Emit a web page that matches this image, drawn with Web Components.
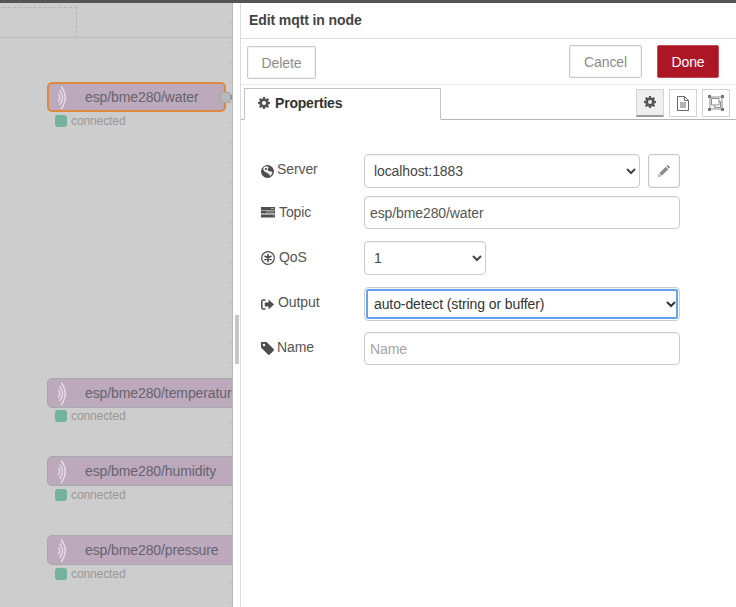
<!DOCTYPE html>
<html>
  <head>
    <meta charset="utf-8" />
    <title>Edit mqtt in node</title>
    <style>
      html, body { margin: 0; height: 100%; overflow: hidden; background: #fff; }
      body { font: 14px "Liberation Sans", Arial, sans-serif; letter-spacing: -0.1px; }
    </style>

    <template id="flowNodeTemplate">
      <style>
        :host { position: absolute; left: 47px; display: block; width: 240px; height: 45px; }
        #body {
          box-sizing: border-box;
          height: 30px;
          background: #bca9bc;
          border: 1px solid #a9a9a9;
          border-radius: 5px;
          color: #67636f;
          line-height: 28px;
          padding-left: 37px;
          white-space: nowrap;
          overflow: hidden;
          position: relative;
        }
        :host([selected]) { width: 179px; }
        :host([selected]) #body { border: 2px solid #dd8a3e; line-height: 26px; padding-left: 36px; }
        svg { position: absolute; left: 8px; top: 3px; }
        :host([selected]) svg { left: 7px; top: 2px; }
        #status { display: flex; align-items: center; gap: 4px; margin: var(--status-gap, 3px) 0 0 8px; height: 12px; font-size: 12px; color: #989898; }
        #dot { width: 12px; height: 12px; background: #73b29c; border-radius: 3px; }
        #port {
          display: none;
          position: absolute;
          left: 173px; top: 10px;
          width: 9px; height: 9px;
          background: #b9b9b9;
          border: 1px solid #a5a5a5;
          border-radius: 3px;
        }
        #port::after {
          content: "";
          position: absolute;
          left: 10px; top: 1px;
          border-left: 3px solid #8f8f8f;
          border-top: 3px solid transparent;
          border-bottom: 3px solid transparent;
        }
        :host([selected]) #port { display: block; }
      </style>
      <div id="body"><svg width="14" height="24" viewBox="0 0 14 24" fill="none" stroke="#e2dce2" stroke-width="1.5" stroke-linecap="round"><path d="M5.500 1Q13 11.500 5.500 22.500"/><path d="M4 5Q9 11.500 4 18.500"/><path d="M2.500 8.500Q5 11.500 2.500 15"/></svg><slot></slot></div>
      <div id="status"><span id="dot"></span><span>connected</span></div>
      <div id="port"></div>
    </template>

    <template id="flowCanvasTemplate">
      <style>
        :host {
          display: block;
          position: relative;
          flex: none;
          box-sizing: border-box;
          width: 233px;
          overflow: hidden;
          background: #cdcdcd;
          border-right: 1px solid #b9b9b9;
        }
        #rule { position: absolute; left: 0; right: 0; top: 34px; height: 1px; background: #bdbdbd; }
        #dash {
          position: absolute;
          left: -2px; top: 4px;
          width: 78px; height: 30px;
          border-top: 1px dashed #b5b5b5;
          border-right: 1px dashed #b5b5b5;
        }
        #ticks {
          position: absolute;
          right: 0; top: 0; bottom: 0;
          width: 3px;
          background: repeating-linear-gradient(to bottom, transparent 0 19px, #bdbdbd 19px 20px);
        }
      </style>
      <div id="dash"></div>
      <div id="rule"></div>
      <div id="ticks"></div>
      <slot></slot>
    </template>

    <template id="plainButtonTemplate">
      <style>
        :host {
          display: inline-flex;
          align-items: center;
          justify-content: center;
          box-sizing: border-box;
          height: 33px;
          background: #fff;
          border: 1px solid #c9c9c9;
          border-radius: 2px;
          color: #8c8c8c;
          box-shadow: inset 0 0 0 1px #f4f4f4;
        }
        :host([primary]) {
          background: #ad1625;
          border-color: #c04a55;
          color: #fff;
          box-shadow: none;
        }
      </style>
      <slot></slot>
    </template>

    <template id="iconTabTemplate">
      <style>
        :host {
          display: flex;
          align-items: center;
          justify-content: center;
          box-sizing: border-box;
          width: 28px;
          height: 28px;
          background: #fff;
          border: 1px solid #d4d4d4;
        }
        :host([active]) {
          background: #efefef;
          border-bottom: 2px solid #9a9a9a;
        }
      </style>
      <slot></slot>
    </template>

    <template id="formRowTemplate">
      <style>
        :host { display: flex; align-items: center; margin-bottom: 12px; color: #555; }
        #label { flex: none; width: 103px; display: flex; align-items: center; }
        #text { margin-left: var(--label-gap, 3px); position: relative; top: var(--label-top, -1px); }
        #control { flex: 1; display: flex; gap: 8px; }
      </style>
      <div id="label"><slot name="icon"></slot><span id="text"></span></div>
      <div id="control"><slot></slot></div>
    </template>

    <template id="textFieldTemplate">
      <style>
        :host { display: block; flex: 1; }
        input {
          display: block;
          box-sizing: border-box;
          width: 100%;
          height: 33px;
          padding: 0 5px;
          border: 1px solid #ccc;
          border-radius: 4px;
          box-shadow: inset 0 1px 1px rgba(0, 0, 0, .05);
          background: #fff;
          color: #555;
          font: 14px "Liberation Sans", Arial, sans-serif;
          letter-spacing: -0.1px;
          outline: none;
        }
        input::placeholder { color: #a5a5a5; opacity: 1; }
      </style>
      <input />
    </template>

    <template id="selectFieldTemplate">
      <style>
        :host { display: block; flex: 1; }
        select {
          display: block;
          box-sizing: border-box;
          width: 100%;
          height: 34px;
          padding: 0 5px;
          border: 1px solid #ccc;
          border-radius: 4px;
          box-shadow: inset 0 1px 1px rgba(0, 0, 0, .05);
          background: #fff;
          color: #444;
          font: 14px "Liberation Sans", Arial, sans-serif;
          letter-spacing: -0.1px;
        }
        :host([focused]) select { outline: 2px solid #66a1ec; outline-offset: -4px; color: #333; }
      </style>
      <select></select>
    </template>

    <template id="editTrayTemplate">
      <style>
        :host { display: flex; flex: 1; min-width: 0; background: #fff; color: #444; }
        #gutter { flex: none; width: 7px; padding-top: 312px; box-sizing: border-box; }
        #handle { width: 4px; height: 49px; margin-left: 2px; background: #c6c6c6; }
        #panel { flex: 1; border-left: 1px solid #dcdcdc; min-width: 0; }
        #title { height: 35px; line-height: 35px; padding-left: 8px; font-weight: bold; color: #444; border-bottom: 1px solid #ddd; }
        #actions { display: flex; height: 46px; padding: 6px 17px 0 6px; box-sizing: border-box; border-bottom: 1px solid #e8e8e8; }
        #actions ::slotted([slot=delete]) { width: 69px; margin-top: 1px; }
        #actions ::slotted([slot=cancel]) { width: 73px; margin-left: auto; margin-right: 15px; }
        #actions ::slotted([slot=done]) { width: 62px; }
        #tabs {
          display: flex;
          box-sizing: border-box;
          height: 35px;
          padding: 3px 6px 0 3px;
          border-bottom: 1px solid #b5b5b5;
        }
        #tab {
          box-sizing: border-box;
          width: 197px;
          height: 32px;
          display: flex;
          align-items: center;
          padding: 0 0 2px 13px;
          gap: 5px;
          background: #fff;
          border: 1px solid #c4c4c4;
          border-bottom: 1px solid #fff;
          font-weight: bold;
          letter-spacing: -0.2px;
          color: #333;
        }
        #icons { margin-left: auto; display: flex; gap: 5px; padding-top: 1px; }
        #icons ::slotted(:last-child) { width: 27px; margin-left: 1px; }
        #form { padding: 34px 56px 0 20px; }
      </style>
      <div id="gutter"><div id="handle"></div></div>
      <div id="panel">
        <div id="title"><slot name="title"></slot></div>
        <div id="actions">
          <slot name="delete"></slot>
          <slot name="cancel"></slot>
          <slot name="done"></slot>
        </div>
        <div id="tabs">
          <div id="tab"><slot name="tab"></slot></div>
          <div id="icons"><slot name="icons"></slot></div>
        </div>
        <div id="form"><slot></slot></div>
      </div>
    </template>

    <script type="module">
      const COG = '<path fill="#555" fill-rule="evenodd" d="M5.900 0h2.200l.4 1.900 1.100.5L11.300 1.300l1.500 1.500-1.100 1.700.5 1.100 1.800.3v2.200l-1.800.4-.5 1.100 1.100 1.600-1.500 1.500-1.700-1.100-1.100.5-.4 1.900H5.900l-.4-1.900-1.100-.5-1.700 1.100-1.500-1.500 1.100-1.600-.5-1.100L0 8.100V5.900l1.800-.3.500-1.100L1.200 2.800l1.500-1.500 1.700 1.100 1.100-.5zM7 4.700a2.300 2.300 0 1 0 0 4.600 2.300 2.300 0 0 0 0-4.600z"/>';
      const ICONS = {
        cog: [14, 14, COG],
        globe: [13, 13, '<circle cx="6.500" cy="6.500" r="6.500" fill="#4d4d4d"/><path fill="#fff" d="M3 1.800 6 1.300 8 2.500 6.500 4.500 7.800 6.300 10.200 6.200 11.600 7.800 9.500 11 8 9.500 6.500 8 4 7 2 4.500z" opacity=".9"/><path fill="#4d4d4d" d="M4 3 6 3 5.500 5 4 4.700z"/>'],
        tasks: [14, 11, '<path fill="#4d4d4d" d="M0 0h14v3H0zM0 3.500h14v3H0zM0 7.500h14v3H0z"/><path fill="#a8a8a8" d="M10 1h3v1h-3zM5 4.500h8v1H5zM12 8.500h1v1h-1z"/>'],
        empire: [14, 14, '<circle cx="7" cy="7" r="6.300" fill="none" stroke="#4d4d4d" stroke-width="1.200"/><g stroke="#4d4d4d" stroke-width="1.700" stroke-linecap="round"><path d="M7 3.600V10.400M4 5.300 10 8.700M10 5.300 4 8.700"/></g>'],
        signout: [13, 11, '<path fill="none" stroke="#4d4d4d" stroke-width="1.500" d="M4.500 .9H2.400Q.8.900.8 2.500V8.500Q.8 10.100 2.400 10.100H4.500"/><path fill="#4d4d4d" d="M7.600.5 13 5.500 7.600 10.500V7.500H3.800V3.500H7.600z"/>'],
        tag: [13, 13, '<path fill="#4d4d4d" fill-rule="evenodd" d="M0 0h5.600l7 7a1.200 1.200 0 0 1 0 1.700L8.700 12.600a1.200 1.200 0 0 1-1.700 0L0 5.600zM3 1.800a1.200 1.200 0 1 0 0 2.400 1.200 1.200 0 0 0 0-2.400z"/>'],
        pencil: [12, 12, '<path fill="#a89f94" d="M0 12 .7 8.800 3.200 11.300z"/><path fill="#8a8a8a" d="M1.300 8.200 7.800 1.700 10.300 4.200 3.800 10.700z"/><path fill="#7a7a7a" d="M8.500 1 9.200.3Q9.600 0 10 .3L11.700 2Q12 2.400 11.700 2.800L11 3.500z"/>'],
        file: [12, 15, '<path fill="none" stroke="#666" d="M.5.500H7.500L11.500 4.500V14.500H.5z"/><path fill="none" stroke="#666" d="M7.500.5V4.500H11.500"/><path stroke="#666" d="M3 7h6M3 9h6M3 11h6"/>'],
        ungroup: [16, 16, '<path fill="none" stroke="#8f8f8f" d="M2 2H14V14H2z"/><path fill="none" stroke="#8f8f8f" d="M3.500 3.500H11V10H3.500zM6.500 10V12.500H12.500V6.500H11"/><path fill="#777" d="M0 0h3v3H0zM13 0h3v3h-3zM0 13h3v3H0zM13 13h3v3h-3z"/>']
      };

      class FaIcon extends HTMLElement {
        connectedCallback() {
          if (this.shadowRoot) return;
          const [w, h, body] = ICONS[this.getAttribute('name')];
          const scale = parseFloat(this.getAttribute('scale') || '1');
          const root = this.attachShadow({ mode: 'open' });
          root.innerHTML = `<style>:host { display: inline-flex; flex: none; } svg { display: block; }</style>
            <svg width="${w * scale}" height="${h * scale}" viewBox="0 0 ${w} ${h}">${body}</svg>`;
        }
      }

      // Elements that only stamp their template and have no behaviour.
      function stamped(templateId) {
        return class extends HTMLElement {
          connectedCallback() {
            if (this.shadowRoot) return;
            const root = this.attachShadow({ mode: 'open' });
            root.appendChild(document.getElementById(templateId).content.cloneNode(true));
          }
        };
      }

      class FormRow extends HTMLElement {
        connectedCallback() {
          if (this.shadowRoot) return;
          const root = this.attachShadow({ mode: 'open' });
          root.appendChild(formRowTemplate.content.cloneNode(true));
          root.getElementById('text').textContent = this.getAttribute('label');
        }
      }

      class TextField extends HTMLElement {
        connectedCallback() {
          if (this.shadowRoot) return;
          const root = this.attachShadow({ mode: 'open' });
          root.appendChild(textFieldTemplate.content.cloneNode(true));
          const input = root.querySelector('input');
          input.value = this.getAttribute('value') || '';
          input.placeholder = this.getAttribute('placeholder') || '';
        }
      }

      class SelectField extends HTMLElement {
        connectedCallback() {
          if (this.shadowRoot) return;
          const root = this.attachShadow({ mode: 'open' });
          root.appendChild(selectFieldTemplate.content.cloneNode(true));
          const option = document.createElement('option');
          option.textContent = this.getAttribute('value');
          root.querySelector('select').appendChild(option);
        }
      }

      customElements.define('fa-icon', FaIcon);
      customElements.define('flow-node', stamped('flowNodeTemplate'));
      customElements.define('flow-canvas', stamped('flowCanvasTemplate'));
      customElements.define('plain-button', stamped('plainButtonTemplate'));
      customElements.define('icon-tab', stamped('iconTabTemplate'));
      customElements.define('edit-tray', stamped('editTrayTemplate'));
      customElements.define('form-row', FormRow);
      customElements.define('text-field', TextField);
      customElements.define('select-field', SelectField);
    </script>
  </head>

  <body>
    <div style="height:3px;background:#555"></div>
    <div style="display:flex;height:604px">
      <flow-canvas>
        <flow-node selected style="top:79px">esp/bme280/water</flow-node>
        <flow-node style="top:375px;--status-gap:2px">esp/bme280/temperature</flow-node>
        <flow-node style="top:453px">esp/bme280/humidity</flow-node>
        <flow-node style="top:532px">esp/bme280/pressure</flow-node>
      </flow-canvas>
      <edit-tray>
        <span slot="title">Edit mqtt in node</span>
        <plain-button slot="delete">Delete</plain-button>
        <plain-button slot="cancel">Cancel</plain-button>
        <plain-button slot="done" primary>Done</plain-button>
        <fa-icon slot="tab" name="cog" scale="0.86"></fa-icon>
        <span slot="tab">Properties</span>
        <icon-tab slot="icons" active><fa-icon name="cog" scale="0.86"></fa-icon></icon-tab>
        <icon-tab slot="icons"><fa-icon name="file"></fa-icon></icon-tab>
        <icon-tab slot="icons"><fa-icon name="ungroup"></fa-icon></icon-tab>

        <form-row label="Server" style="margin-bottom:8px;--label-top:-2px">
          <fa-icon slot="icon" name="globe"></fa-icon>
          <select-field value="localhost:1883"></select-field>
          <plain-button style="width:32px;height:34px;flex:none;border-radius:3px"><fa-icon name="pencil"></fa-icon></plain-button>
        </form-row>
        <form-row label="Topic" style="--label-gap:4px">
          <fa-icon slot="icon" name="tasks"></fa-icon>
          <text-field value="esp/bme280/water"></text-field>
        </form-row>
        <form-row label="QoS" style="--label-gap:4px">
          <fa-icon slot="icon" name="empire"></fa-icon>
          <select-field value="1" style="flex:none;width:122px"></select-field>
        </form-row>
        <form-row label="Output" style="margin-bottom:11px;--label-gap:4px;--label-top:-2px">
          <fa-icon slot="icon" name="signout"></fa-icon>
          <select-field value="auto-detect (string or buffer)" focused></select-field>
        </form-row>
        <form-row label="Name" style="--label-top:-2px">
          <fa-icon slot="icon" name="tag"></fa-icon>
          <text-field placeholder="Name"></text-field>
        </form-row>
      </edit-tray>
    </div>
  </body>
</html>
